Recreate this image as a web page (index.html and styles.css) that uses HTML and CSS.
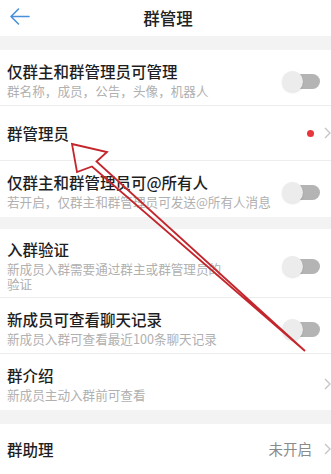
FILE: index.html
```html
<!DOCTYPE html>
<html lang="zh-CN">
<head>
<meta charset="utf-8">
<title>群管理</title>
<link rel="stylesheet" href="styles.css">
</head>
<body>
<div class="page">
  <header class="topbar">
    <svg class="back" width="22" height="20" viewBox="0 0 22 20"><path d="M20 9.5H2M9.5 2L2 9.5l7.5 7.5" fill="none" stroke="#4a90d9" stroke-width="1.6" stroke-linecap="round" stroke-linejoin="round"/></svg>
    <h1 class="title-main">群管理</h1>
  </header>
  <div class="band band-top"></div>
  <section class="group">
    <div class="row">
      <div class="text"><div class="title">仅群主和群管理员可管理</div><div class="sub">群名称，成员，公告，头像，机器人</div></div>
      <span class="switch"></span>
    </div>
    <div class="row row-single">
      <div class="text"><div class="title">群管理员</div></div>
      <span class="dot"></span>
      <svg class="chev" width="7" height="12" viewBox="0 0 7 12"><path d="M1 1l5 5-5 5" fill="none" stroke="#c4c4c4" stroke-width="1.3"/></svg>
    </div>
    <div class="row row-last">
      <div class="text"><div class="title">仅群主和群管理员可@所有人</div><div class="sub">若开启，仅群主和群管理员可发送@所有人消息</div></div>
      <span class="switch"></span>
    </div>
  </section>
  <div class="band band-mid"></div>
  <section class="group">
    <div class="row row-tall">
      <div class="text"><div class="title">入群验证</div><div class="sub sub-wrap">新成员入群需要通过群主或群管理员的验证</div></div>
      <span class="switch"></span>
    </div>
    <div class="row">
      <div class="text"><div class="title">新成员可查看聊天记录</div><div class="sub">新成员入群可查看最近100条聊天记录</div></div>
      <span class="switch"></span>
    </div>
    <div class="row row-last">
      <div class="text"><div class="title">群介绍</div><div class="sub">新成员主动入群前可查看</div></div>
      <svg class="chev" width="7" height="12" viewBox="0 0 7 12"><path d="M1 1l5 5-5 5" fill="none" stroke="#c4c4c4" stroke-width="1.3"/></svg>
    </div>
  </section>
  <div class="band band-bottom"></div>
  <section class="group">
    <div class="row row-single row-last">
      <div class="text"><div class="title">群助理</div></div>
      <span class="value">未开启</span>
      <svg class="chev" width="7" height="12" viewBox="0 0 7 12"><path d="M1 1l5 5-5 5" fill="none" stroke="#c4c4c4" stroke-width="1.3"/></svg>
    </div>
  </section>
  <svg class="annot" width="331" height="474" viewBox="0 0 331 474">
    <polygon points="72,144 107,152 96.5,161.5 305,351 92,166.5 77,172" fill="none" stroke="#c3262c" stroke-width="1.8" stroke-linejoin="miter"/>
  </svg>
</div>
</body>
</html>
```

FILE: styles.css
```css
* { box-sizing: border-box; }
html, body { margin: 0; padding: 0; background: #fff; }
body {
  font-family: "Noto Sans CJK SC", "Noto Sans", sans-serif;
  color: #1f1f1f;
}
.page {
  position: relative;
  width: 331px;
  height: 474px;
  overflow: hidden;
  background: #fff;
}
.topbar {
  height: 36px;
  display: flex;
  align-items: center;
  justify-content: center;
  position: relative;
}
.back {
  position: absolute;
  left: 9px;
  top: 7px;
}
.title-main {
  margin: 0 0 0 5px;
  font-size: 16.5px;
  font-weight: 500;
  color: #222;
  line-height: 20px;
}
.band { background: #f3f3f3; }
.band-top { height: 14px; }
.band-mid { height: 12px; }
.band-bottom { height: 14px; }
.group { background: #fff; }
.row {
  display: flex;
  align-items: center;
  padding: 11px 0 6px 7px;
  border-bottom: 1px solid #ededed;
}
.row-last { border-bottom: none; padding-bottom: 7px; }
.row-single { height: 55px; padding-top: 0; padding-bottom: 0; }
.row-single.row-last { height: 50px; }
.row-tall { padding-top: 10px; padding-bottom: 6px; }
.text { flex: 1; min-width: 0; }
.title {
  font-size: 15.5px;
  line-height: 20px;
  font-weight: 500;
  color: #1e1e1e;
}
.sub {
  margin-top: 2px;
  font-size: 12.6px;
  line-height: 16px;
  color: #b0b0b0;
  white-space: nowrap;
}
.sub-wrap {
  white-space: normal;
  width: 216px;
  line-height: 15px;
}
.switch {
  position: relative;
  width: 36px;
  height: 15px;
  margin-right: 11px;
  margin-top: 3px;
  border-radius: 8px;
  background: #b4b4b4;
  flex: none;
}
.switch::before {
  content: "";
  position: absolute;
  left: -2px;
  top: -3px;
  width: 21px;
  height: 21px;
  border-radius: 50%;
  background: #ececec;
  box-shadow: 0 1px 2px rgba(0,0,0,0.12);
}
.dot {
  width: 7px;
  height: 7px;
  border-radius: 50%;
  background: #e8343a;
  margin-right: 10px;
  flex: none;
}
.chev { flex: none; margin-right: 0; display: block; }
.value {
  font-size: 14.5px;
  line-height: 20px;
  color: #8a8a8a;
  margin-right: 12px;
}
.annot {
  position: absolute;
  left: 0;
  top: 0;
  pointer-events: none;
}
```
